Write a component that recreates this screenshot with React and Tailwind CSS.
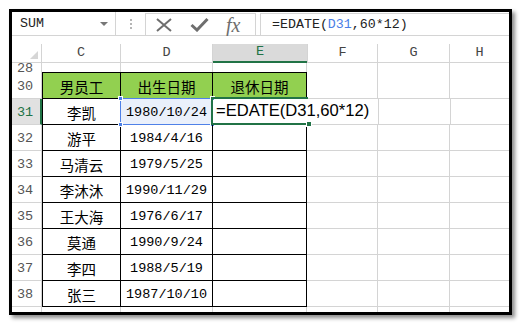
import React from 'react';

const MONO = "font-['Liberation_Mono','Noto_Sans_CJK_SC',monospace]";
const CJK = "font-['Noto_Sans_CJK_SC',sans-serif]";

const ROWS = [
    { n: 31, name: '李凯', date: '1980/10/24' },
    { n: 32, name: '游平', date: '1984/4/16' },
    { n: 33, name: '马清云', date: '1979/5/25' },
    { n: 34, name: '李沐沐', date: '1990/11/29' },
    { n: 35, name: '王大海', date: '1976/6/17' },
    { n: 36, name: '莫通', date: '1990/9/24' },
    { n: 37, name: '李四', date: '1988/5/19' },
    { n: 38, name: '张三', date: '1987/10/10' },
];

const Corner = ({ className }) => (
    <span className={`absolute w-[5px] h-[5px] bg-[#4f81e8] border border-white ${className}`} />
);

const FormulaBar = () => (
    <div className="flex h-[24px] border-b border-[#d4d4d4] bg-white">
        <div className={`w-[104px] flex items-center justify-between pl-[8px] pr-[7px] border-r border-[#d4d4d4] text-[13.3px] text-[#222] ${MONO}`}>
            <span>SUM</span>
            <span className="w-0 h-0 border-l-[4px] border-r-[4px] border-t-[4px] border-l-transparent border-r-transparent border-t-[#777]" />
        </div>
        <div className="w-[29px] flex flex-col items-center justify-center gap-[2px]">
            <span className="w-[2px] h-[2px] bg-[#b5b5b5]" />
            <span className="w-[2px] h-[2px] bg-[#b5b5b5]" />
            <span className="w-[2px] h-[2px] bg-[#b5b5b5]" />
        </div>
        <div className="w-[111px] mt-[1px] flex items-center border-x border-t border-[#d4d4d4]">
            <svg width="18" height="14" viewBox="0 0 18 14" className="ml-[9px]">
                <path d="M2 1 L16 13 M16 1 L2 13" stroke="#6e6e6e" strokeWidth="2" fill="none" />
            </svg>
            <svg width="19" height="15" viewBox="0 0 19 15" className="ml-[17px]">
                <path d="M1.5 8 L7 13 L17.5 2" stroke="#6e6e6e" strokeWidth="3" fill="none" />
            </svg>
            <span className="ml-[17px] text-[20px] italic leading-none text-[#6e6e6e] font-['Liberation_Serif',serif]">fx</span>
        </div>
        <div className="w-[4px]" />
        <div className={`flex-1 mt-[1px] flex items-center pl-[11px] border-l border-t border-[#d4d4d4] text-[13.3px] text-[#222] ${MONO}`}>
            =EDATE(<span className="text-[#4a7ee6]">D31</span>,60*12)
        </div>
    </div>
);

const ColumnHeaders = () => (
    <div className={`flex h-[19px] border-b border-[#d4d4d4] text-[13.5px] text-[#444] ${MONO}`}>
        <div className="relative w-[30px] border-r border-[#d4d4d4]">
            <svg width="8" height="8" viewBox="0 0 8 8" className="absolute right-[3px] bottom-[3px]">
                <polygon points="8,0 8,8 0,8" fill="#d6d6d6" />
            </svg>
        </div>
        <div className="w-[79px] flex items-center justify-center border-r border-[#d4d4d4]">C</div>
        <div className="w-[92px] flex items-center justify-center border-r border-[#d4d4d4]">D</div>
        <div className="w-[94px] flex items-center justify-center bg-[#dadada] text-[#217346] border-b-2 border-[#217346] -mb-[1px]">E</div>
        <div className="w-[71px] flex items-center justify-center border-x border-[#d4d4d4]">F</div>
        <div className="w-[72px] flex items-center justify-center border-r border-[#d4d4d4]">G</div>
        <div className="flex-1 flex items-center justify-center">H</div>
    </div>
);

const RowHead = ({ n, active }) => (
    <div
        className={`w-[30px] flex items-end pl-[5px] pb-[1px] text-[13.5px] ${MONO} ${active ? 'bg-[#e1e1e1] text-[#217346] border-r-2 border-[#217346] border-b border-b-[#d4d4d4]' : 'text-[#555] border-r border-b border-[#d4d4d4]'}`}
    >
        {n}
    </div>
);

const GrayCells = () => (
    <>
        <div className="w-[71px] border-r border-b border-[#d4d4d4]" />
        <div className="w-[72px] border-r border-b border-[#d4d4d4]" />
        <div className="flex-1 border-b border-[#d4d4d4]" />
    </>
);

const DataRow = ({ row }) => {
    const active = row.n === 31;
    return (
        <div className="flex h-[26px] shrink-0">
            <RowHead n={row.n} active={active} />
            <div className={`w-[79px] flex items-center justify-center pt-[2px] border-l border-r border-b border-black text-[14.5px] text-black ${CJK}`}>
                {row.name}
            </div>
            <div className={`relative w-[92px] flex items-center justify-center pt-[3px] border-r border-b border-black text-[13.5px] text-black ${MONO} ${active ? 'bg-[#eaf0fb]' : ''}`}>
                {row.date}
                {active && (
                    <div className="absolute -left-[1px] -top-[1px] -right-[1px] -bottom-[1px] border border-[#4f81e8]">
                        <Corner className="-left-[3px] -top-[3px]" />
                        <Corner className="-right-[3px] -top-[3px]" />
                        <Corner className="-left-[3px] -bottom-[3px]" />
                        <Corner className="-right-[3px] -bottom-[3px]" />
                    </div>
                )}
            </div>
            <div className={`relative w-[94px] flex items-center border-b border-black ${active ? '' : 'border-r'}`}>
                {active && (
                    <>
                        <span className="relative z-30 pl-[3px] whitespace-nowrap text-[16.6px] text-black font-['Liberation_Sans',sans-serif]">
                            =EDATE(D31,60*12)
                        </span>
                        <div className="absolute z-20 -left-[2px] -top-[2px] -right-[1px] -bottom-[1px] border-t-2 border-l-2 border-b-2 border-[#217346]">
                            <span className="absolute -right-[4px] -bottom-[4px] w-[6px] h-[6px] bg-[#217346] border border-white" />
                        </div>
                    </>
                )}
            </div>
            {active ? (
                <>
                    <div className="w-[72px] border-r border-b border-[#d4d4d4]" />
                    <div className="w-[72px] border-r border-b border-[#d4d4d4]" />
                    <div className="flex-1 border-b border-[#d4d4d4]" />
                </>
            ) : (
                <GrayCells />
            )}
        </div>
    );
};

const Sheet = () => (
    <div className="flex-1 flex flex-col overflow-hidden">
        {/* row 28, mostly scrolled out of view */}
        <div className="flex h-[9px] shrink-0 overflow-hidden">
            <div className={`w-[30px] flex items-end pl-[5px] border-r border-[#d4d4d4] text-[13.5px] leading-none text-[#555] ${MONO}`}>
                <span className="-mb-[3px]">28</span>
            </div>
            <div className="w-[79px] border-r border-[#d4d4d4]" />
            <div className="w-[92px] border-r border-[#d4d4d4]" />
            <div className="w-[94px] border-r border-[#d4d4d4]" />
            <div className="w-[71px] border-r border-[#d4d4d4]" />
            <div className="w-[72px] border-r border-[#d4d4d4]" />
            <div className="flex-1" />
        </div>

        {/* header row 30 */}
        <div className="flex h-[27px] shrink-0">
            <div className={`w-[30px] flex items-end pl-[5px] pb-[1px] border-r border-b border-[#d4d4d4] text-[13.5px] text-[#555] ${MONO}`}>30</div>
            <div className={`w-[79px] flex items-center justify-center pt-[2px] bg-[#92d050] border border-black text-[14.5px] text-black ${CJK}`}>男员工</div>
            <div className={`w-[92px] flex items-center justify-center pt-[2px] bg-[#92d050] border-y border-r border-black text-[14.5px] text-black ${CJK}`}>出生日期</div>
            <div className={`w-[94px] flex items-center justify-center pt-[2px] bg-[#92d050] border-y border-r border-black text-[14.5px] text-black ${CJK}`}>退休日期</div>
            <GrayCells />
        </div>

        {ROWS.map(row => (
            <DataRow key={row.n} row={row} />
        ))}

        {/* row 39, cut off by the frame */}
        <div className="flex flex-1">
            <div className="w-[30px] border-r border-[#d4d4d4]" />
            <div className="w-[79px] border-r border-[#d4d4d4]" />
            <div className="w-[92px] border-r border-[#d4d4d4]" />
            <div className="w-[94px] border-r border-[#d4d4d4]" />
            <div className="w-[71px] border-r border-[#d4d4d4]" />
            <div className="w-[72px] border-r border-[#d4d4d4]" />
            <div className="flex-1" />
        </div>
    </div>
);

export default function App() {
    return (
        <div className="w-[522px] h-[327px] bg-white pl-[9px] pt-[9px]">
            <div className="w-[503px] h-[306px] flex flex-col border-[3px] border-black bg-white shadow-[3px_3px_4px_rgba(0,0,0,0.45)]">
                <FormulaBar />
                <div className="h-[8px] shrink-0 bg-white" />
                <ColumnHeaders />
                <Sheet />
            </div>
        </div>
    );
}
